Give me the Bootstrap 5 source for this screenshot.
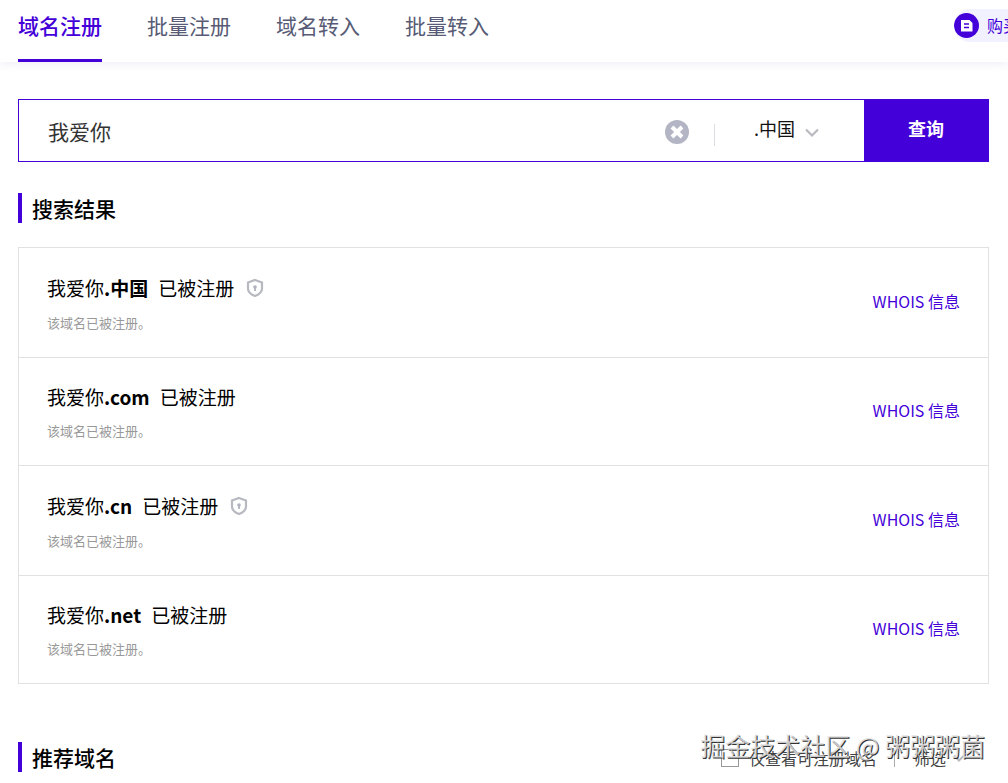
<!DOCTYPE html>
<html lang="zh-CN">
<head>
<meta charset="utf-8">
<meta name="viewport" content="width=device-width, initial-scale=1">
<title>域名注册</title>
<link href="https://cdn.jsdelivr.net/npm/bootstrap@5.3.0/dist/css/bootstrap.min.css" rel="stylesheet">
<style>
:root { --brand: #4400d9; --line: #e1e1e3; }
body { font-family: "Noto Sans CJK SC", sans-serif; color: #000; overflow-x: hidden; }
.site-head { height: 62px; box-shadow: 0 3px 8px rgba(60, 60, 140, .07); }
.domain-tabs { gap: 45px; padding-left: 18px; }
.domain-tabs .nav-link { font-size: 21px; line-height: 28px; height: 62px; padding: 11px 0 0; color: #575b75; border-bottom: 3px solid transparent; white-space: nowrap; }
.domain-tabs .nav-link.active { color: var(--brand); font-weight: 500; border-color: var(--brand); }
.buy-link { width: 54px; height: 33px; margin-top: 9px; padding: 4px 0; gap: 8px; overflow: hidden; background: #f1f1ff; border-radius: 16px 0 0 16px; color: var(--brand); font-size: 16px; line-height: 25px; white-space: nowrap; }
.page-main { padding: 37px 19px 0 18px; }
.search-bar { height: 63px; border: 1px solid var(--brand); }
.search-bar .form-control { font-size: 21px; padding: 2px 29px 0; color: #333; background: transparent; }
.clear-btn { margin-right: 25px; margin-top: 3px; }
.split { width: 1px; height: 22px; background: #dcdde3; }
.search-bar .split { margin-top: 9px; }
.suffix-box { width: 149px; }
.suffix-box .form-select { font-size: 18px; height: 61px; padding: 0 0 5px 39px; background: transparent; color: #111; }
.suffix-box svg { right: 44px; top: 28px; pointer-events: none; }
.query-btn { width: 124px; font-size: 18px; font-weight: 700; padding: 0 0 4px; color: #fff; background: var(--brand); }
.query-btn:hover { background: #3600b0; color: #fff; }
.block-title { font-size: 21px; line-height: 30px; font-weight: 500; border-left: 4px solid var(--brand); padding: 0 0 0 10px; }
.results { margin-top: 31px; }
.result-list { margin-top: 24px; --bs-list-group-border-color: var(--line); }
.result-list .list-group-item { padding: 24px 28px 24px; color: #000; }
.result-name { font-size: 19px; line-height: 29px; }
.result-name.has-shield { line-height: 31px; }
.state-text { margin-left: 10px; }
.shield { margin-left: 12px; }
.result-note { font-size: 13px; line-height: 20px; margin-top: 10px; color: #999; }
.whois-link { font-size: 16px; color: var(--brand); padding-bottom: 4px; }
.recommend { margin-top: 58px; padding-bottom: 11px; }
.filter-bar { font-size: 16px; line-height: 24px; color: #444; padding: 4px 23px 0 0; }
.filter-bar .form-check-input { width: 18px; height: 18px; margin: 0 10px 0 0; border: 1px solid #999; }
.filter-bar .split { height: 17px; margin: 0 19px 0 17px; background: #aaa; }
.filter-btn { font-size: 16px; line-height: 24px; color: #444; gap: 6px; }
.watermark { right: 4px; bottom: 20px; font-size: 25px; line-height: 36px; color: rgba(225, 225, 225, .85); text-shadow: 1px 1px 0 #333; white-space: nowrap; pointer-events: none; }
</style>
</head>
<body>
<header class="site-head d-flex justify-content-between">
  <nav class="nav domain-tabs flex-nowrap">
    <a class="nav-link active" aria-current="page" href="#">域名注册</a>
    <a class="nav-link" href="#">批量注册</a>
    <a class="nav-link" href="#">域名转入</a>
    <a class="nav-link" href="#">批量转入</a>
  </nav>
  <a class="buy-link d-flex text-decoration-none" href="#">
    <svg class="flex-shrink-0" width="25" height="25" viewBox="0 0 25 25" aria-hidden="true"><circle cx="12.500" cy="12.500" r="12.500" fill="#4400d9"/><path d="M7 7h8.500l3 3v8.500H7z" fill="#fff"/><path d="M10 11h5M10 14.500h5" stroke="#4400d9" stroke-width="1.500"/></svg>
    <span>购买</span>
  </a>
</header>

<main class="page-main">
  <form class="search-bar d-flex align-items-stretch">
    <input class="form-control flex-grow-1 border-0 rounded-0 shadow-none" type="text" value="我爱你" aria-label="域名">
    <button class="clear-btn btn p-0 border-0" type="button" aria-label="清空">
      <svg class="d-block" width="24" height="24" viewBox="0 0 24 24"><circle cx="12" cy="12" r="12" fill="#b3b5c4"/><path d="M7 7l10 10M17 7l-10 10" stroke="#fff" stroke-width="4"/></svg>
    </button>
    <span class="split align-self-center flex-shrink-0"></span>
    <div class="suffix-box position-relative flex-shrink-0">
      <select class="form-select border-0 rounded-0 shadow-none" aria-label="后缀"><option>.中国</option><option>.com</option><option>.cn</option><option>.net</option></select>
      <svg class="position-absolute" width="16" height="10" viewBox="0 0 16 10" aria-hidden="true"><path d="M2 1.500l6 6 6-6" fill="none" stroke="#b9bac0" stroke-width="2.200"/></svg>
    </div>
    <button class="query-btn btn rounded-0 border-0 flex-shrink-0" type="submit">查询</button>
  </form>

  <section class="results">
    <h2 class="block-title mb-0">搜索结果</h2>
    <ul class="result-list list-group rounded-0 mb-0">
      <li class="list-group-item d-flex justify-content-between align-items-center">
        <div>
          <div class="result-name has-shield d-flex align-items-center">我爱你<b>.中国</b><span class="state-text">已被注册</span>
            <svg class="shield" width="18" height="20" viewBox="0 0 18 20" aria-hidden="true"><path d="M9 2l7 2.500v6c0 4-3 6-7 7.500C5 16.500 2 14.500 2 10.500v-6z" fill="none" stroke="#b7b8c0" stroke-width="2.200"/><circle cx="9" cy="9" r="1.800" fill="#b0b2bd"/><path d="M9 9v4" stroke="#b0b2bd" stroke-width="1.800"/></svg>
          </div>
          <div class="result-note">该域名已被注册。</div>
        </div>
        <a class="whois-link text-decoration-none" href="#">WHOIS 信息</a>
      </li>
      <li class="list-group-item d-flex justify-content-between align-items-center">
        <div>
          <div class="result-name d-flex align-items-center">我爱你<b>.com</b><span class="state-text">已被注册</span></div>
          <div class="result-note">该域名已被注册。</div>
        </div>
        <a class="whois-link text-decoration-none" href="#">WHOIS 信息</a>
      </li>
      <li class="list-group-item d-flex justify-content-between align-items-center">
        <div>
          <div class="result-name has-shield d-flex align-items-center">我爱你<b>.cn</b><span class="state-text">已被注册</span>
            <svg class="shield" width="18" height="20" viewBox="0 0 18 20" aria-hidden="true"><path d="M9 2l7 2.500v6c0 4-3 6-7 7.500C5 16.500 2 14.500 2 10.500v-6z" fill="none" stroke="#b7b8c0" stroke-width="2.200"/><circle cx="9" cy="9" r="1.800" fill="#b0b2bd"/><path d="M9 9v4" stroke="#b0b2bd" stroke-width="1.800"/></svg>
          </div>
          <div class="result-note">该域名已被注册。</div>
        </div>
        <a class="whois-link text-decoration-none" href="#">WHOIS 信息</a>
      </li>
      <li class="list-group-item d-flex justify-content-between align-items-center">
        <div>
          <div class="result-name d-flex align-items-center">我爱你<b>.net</b><span class="state-text">已被注册</span></div>
          <div class="result-note">该域名已被注册。</div>
        </div>
        <a class="whois-link text-decoration-none" href="#">WHOIS 信息</a>
      </li>
    </ul>
  </section>

  <section class="recommend position-relative d-flex justify-content-between align-items-start">
    <h2 class="block-title mb-0">推荐域名</h2>
    <div class="filter-bar d-flex align-items-center">
      <input class="form-check-input rounded-0" type="checkbox" id="only-free">
      <label for="only-free">仅查看可注册域名</label>
      <span class="split"></span>
      <button class="filter-btn btn p-0 border-0 d-flex align-items-center" type="button">筛选
        <svg width="14" height="9" viewBox="0 0 14 9" aria-hidden="true"><path d="M2 1.500l5 5 5-5" fill="none" stroke="#b9bac0" stroke-width="2"/></svg>
      </button>
    </div>
    <div class="watermark position-absolute">掘金技术社区 @ 粥粥粥菌</div>
  </section>
</main>
<script src="https://cdn.jsdelivr.net/npm/bootstrap@5.3.0/dist/js/bootstrap.bundle.min.js"></script>
</body>
</html>
